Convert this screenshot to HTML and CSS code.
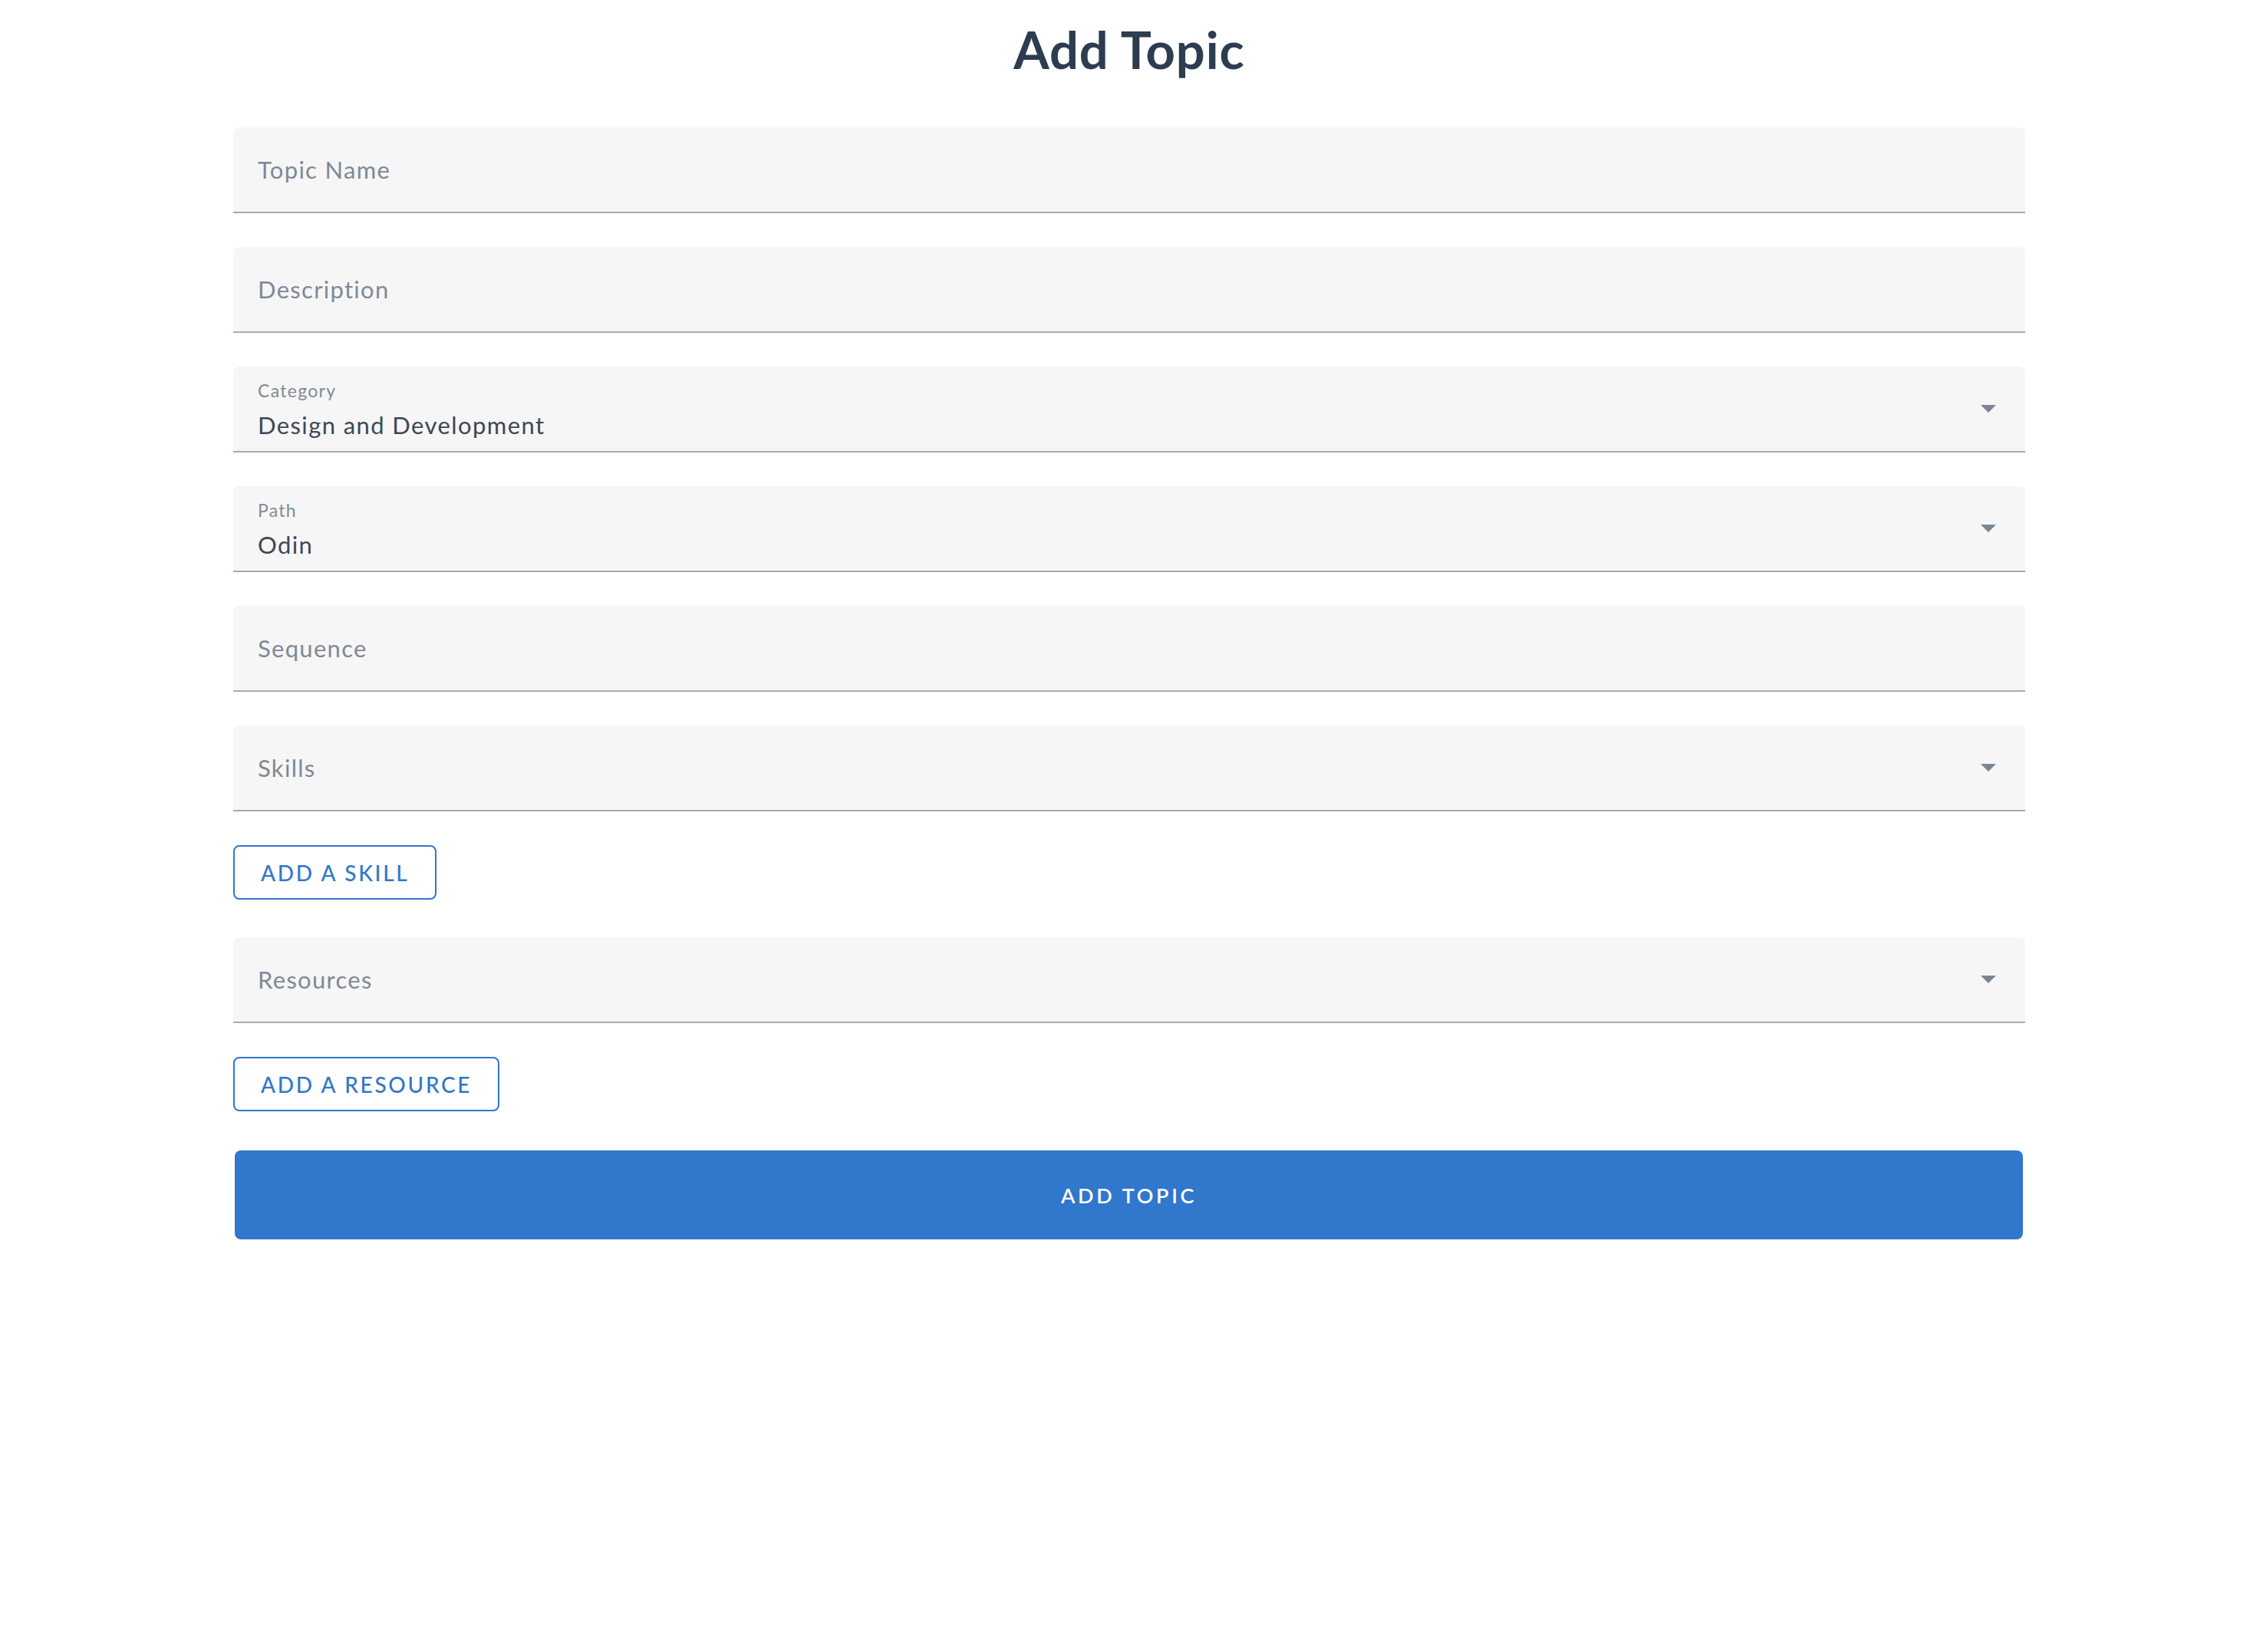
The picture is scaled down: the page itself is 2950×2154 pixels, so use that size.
FILE: index.html
```html
<!DOCTYPE html>
<html lang="en">
<head>
<meta charset="utf-8">
<title>Add Topic</title>
<link rel="stylesheet" href="styles.css">
</head>
<body>
<main class="page">
  <h1 class="title">Add Topic</h1>
  <form class="form">
    <div class="field"><span class="placeholder">Topic Name</span></div>
    <div class="field"><span class="placeholder">Description</span></div>
    <div class="field select">
      <div class="select-body">
        <span class="label">Category</span>
        <span class="value">Design and Development</span>
      </div>
      <span class="arrow"></span>
    </div>
    <div class="field select">
      <div class="select-body">
        <span class="label">Path</span>
        <span class="value">Odin</span>
      </div>
      <span class="arrow"></span>
    </div>
    <div class="field"><span class="placeholder">Sequence</span></div>
    <div class="field select">
      <span class="placeholder">Skills</span>
      <span class="arrow"></span>
    </div>
    <div class="btn-row"><button type="button" class="btn-outline">ADD A SKILL</button></div>
    <div class="field select">
      <span class="placeholder">Resources</span>
      <span class="arrow"></span>
    </div>
    <div class="btn-row last"><button type="button" class="btn-outline">ADD A RESOURCE</button></div>
    <button type="button" class="btn-submit">ADD TOPIC</button>
  </form>
</main>
</body>
</html>
```
FILE: styles.css
```css
html, body {
  margin: 0;
  padding: 0;
  background: #ffffff;
}
body {
  font-family: "Lato", "Noto Sans", sans-serif;
  color: #3b4858;
}
.page {
  width: 2336px;
  margin: 0 0 0 304px;
}
.title {
  margin: 31px 0 68px;
  font-size: 67px;
  line-height: 67px;
  font-weight: 700;
  text-align: center;
  color: #2d3d50;
  letter-spacing: 0.8px;
}
.form {
  display: flex;
  flex-direction: column;
  gap: 44px;
}
.field {
  height: 110px;
  background: #f6f6f6;
  border-bottom: 2px solid #a6acb4;
  border-radius: 8px 8px 0 0;
  padding: 0 38px 0 32px;
  display: flex;
  align-items: center;
  justify-content: space-between;
}
.placeholder {
  font-size: 31px;
  color: #7f8997;
  letter-spacing: 1.3px;
}
.select-body {
  display: flex;
  flex-direction: column;
  align-self: stretch;
  padding-top: 19px;
}
.label {
  font-size: 23px;
  line-height: 24px;
  color: #808a97;
  letter-spacing: 1.3px;
}
.value {
  margin-top: 15px;
  font-size: 31px;
  line-height: 37px;
  color: #3b4858;
  letter-spacing: 1.4px;
}
.arrow {
  width: 0;
  height: 0;
  border-left: 10px solid transparent;
  border-right: 10px solid transparent;
  border-top: 10px solid #7b8594;
}
.btn-row {
  display: flex;
  margin-bottom: 5px;
}
.btn-row.last {
  margin-bottom: 7px;
}
.btn-outline {
  height: 71px;
  padding: 0 34px;
  background: #ffffff;
  border: 2px solid #3177cc;
  border-radius: 8px;
  color: #3177cc;
  font-family: "Lato", "Noto Sans", sans-serif;
  font-size: 28px;
  font-weight: 500;
  letter-spacing: 2.7px;
}
.btn-submit {
  height: 116px;
  margin: 0 3px 0 2px;
  background: #3177cc;
  border: none;
  border-radius: 8px;
  color: #ffffff;
  font-family: "Lato", "Noto Sans", sans-serif;
  font-size: 27px;
  font-weight: 600;
  letter-spacing: 3.6px;
}
```
